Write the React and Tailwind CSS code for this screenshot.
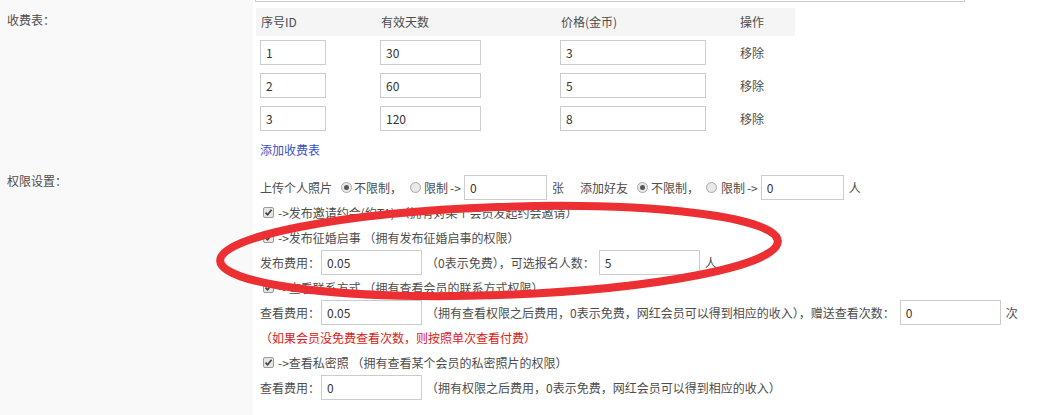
import React from 'react';

const feeRows = [
  { id: '1', days: '30', price: '3' },
  { id: '2', days: '60', price: '5' },
  { id: '3', days: '120', price: '8' }
];

function Radio({ checked, className = '' }) {
  return (
    <span className={`inline-flex h-[11px] w-[11px] shrink-0 items-center justify-center rounded-full border border-[#a9a9a9] bg-[#e9e9e9] ${className}`}>
      {checked && <span className="h-[5px] w-[5px] rounded-full bg-[#555]" />}
    </span>
  );
}

function Check({ className = '' }) {
  return (
    <span className={`inline-flex h-[11px] w-[11px] shrink-0 items-center justify-center rounded-[2px] border border-[#9c9c9c] bg-[#e6e6e6] ${className}`}>
      <svg width="9" height="9" viewBox="0 0 9 9">
        <path d="M1.5 4.6 L3.6 6.8 L7.6 1.8" fill="none" stroke="#3f3f3f" strokeWidth="1.6" />
      </svg>
    </span>
  );
}

function Field({ value, width, className = '' }) {
  return (
    <div
      className={`flex h-[25px] shrink-0 items-center border border-[#cccccc] bg-white pl-[5px] text-[12px] text-[#333] ${className}`}
      style={{ width }}
    >
      {value}
    </div>
  );
}

function Row({ children }) {
  return <div className="flex h-[25px] items-center whitespace-nowrap pl-[7px]">{children}</div>;
}

export default function App() {
  return (
    <div className="relative h-[415px] w-[1051px] overflow-hidden bg-white font-['Microsoft_YaHei','Noto_Sans_CJK_SC',sans-serif] text-[12px] leading-[18px] text-[#4d4d4d]">
      {/* 收费表 */}
      <div className="flex h-[170px]">
        <div className="w-[253px] shrink-0 bg-[#f9f9f9] pl-[7px] pt-[11px]">收费表：</div>
        <div className="flex-1">
          <div className="ml-[2px] h-[2px] w-[710px] border-b border-l border-r border-[#cccccc]" />
          <div className="ml-[3px] mt-[6px] grid w-[539px] grid-cols-[120px_180px_179px_60px]">
            {['序号ID', '有效天数', '价格(金币)', '操作'].map((h) => (
              <div key={h} className="flex h-[28px] items-center bg-[#f5f5f5] pl-[5px]">{h}</div>
            ))}
            {feeRows.map((r) => (
              <React.Fragment key={r.id}>
                <div className="flex h-[33px] items-center pl-[4px]"><Field value={r.id} width={66} /></div>
                <div className="flex h-[33px] items-center pl-[4px]"><Field value={r.days} width={101} /></div>
                <div className="flex h-[33px] items-center pl-[4px]"><Field value={r.price} width={146} /></div>
                <div className="flex h-[33px] items-center pl-[5px]">移除</div>
              </React.Fragment>
            ))}
          </div>
          <div className="flex h-[30px] items-center pl-[7px] text-[#3a52c4]">添加收费表</div>
        </div>
      </div>

      {/* 权限设置 */}
      <div className="flex h-[245px]">
        <div className="w-[253px] shrink-0 bg-[#f9f9f9] pl-[7px] pt-[2px]">权限设置：</div>
        <div className="flex-1 pt-[5px]">
          <Row>
            <span>上传个人照片</span>
            <Radio checked className="ml-[9px]" />
            <span className="ml-[2px]">不限制，</span>
            <Radio className="ml-[8px]" />
            <span className="ml-[3px]">限制</span>
            <span className="ml-[2px] mr-[3px]">-&gt;</span>
            <Field value="0" width={83} />
            <span className="ml-[5px]">张</span>
            <span className="ml-[16px]">添加好友</span>
            <Radio checked className="ml-[9px]" />
            <span className="ml-[3px]">不限制，</span>
            <Radio className="ml-[7px]" />
            <span className="ml-[4px]">限制</span>
            <span className="ml-[2px] mr-[3px]">-&gt;</span>
            <Field value="0" width={83} />
            <span className="ml-[5px]">人</span>
          </Row>
          <Row>
            <Check className="ml-[3px]" />
            <span className="ml-[4px]">-&gt;发布邀请约会(约TA) （拥有对某个会员发起约会邀请）</span>
          </Row>
          <Row>
            <Check className="ml-[3px]" />
            <span className="ml-[4px]">-&gt;发布征婚启事 （拥有发布征婚启事的权限）</span>
          </Row>
          <Row>
            <span>发布费用：</span>
            <Field value="0.05" width={101} className="ml-[1px]" />
            <span className="ml-[4px] mr-[4px]">（0表示免费），可选报名人数：</span>
            <Field value="5" width={101} />
            <span className="ml-[5px]">人</span>
          </Row>
          <Row>
            <Check className="ml-[3px]" />
            <span className="ml-[4px]">-&gt;查看联系方式 （拥有查看会员的联系方式权限）</span>
          </Row>
          <Row>
            <span>查看费用：</span>
            <Field value="0.05" width={101} className="ml-[1px]" />
            <span className="ml-[4px] mr-[5px]">（拥有查看权限之后费用，0表示免费，网红会员可以得到相应的收入），赠送查看次数：</span>
            <Field value="0" width={101} />
            <span className="ml-[5px]">次</span>
          </Row>
          <Row>
            <span className="text-[#e02020]">（如果会员没免费查看次数，则按照单次查看付费）</span>
          </Row>
          <Row>
            <Check className="ml-[3px]" />
            <span className="ml-[4px]">-&gt;查看私密照 （拥有查看某个会员的私密照片的权限）</span>
          </Row>
          <Row>
            <span>查看费用：</span>
            <Field value="0" width={101} className="ml-[1px]" />
            <span className="ml-[4px]">（拥有权限之后费用，0表示免费，网红会员可以得到相应的收入）</span>
          </Row>
        </div>
      </div>

      {/* red hand-drawn annotation */}
      <svg className="pointer-events-none absolute left-0 top-0" width="1051" height="415">
        <ellipse cx="499" cy="251" rx="279" ry="44" transform="rotate(-2 499 251)" fill="none" stroke="#ec2f33" strokeWidth="8" />
      </svg>
    </div>
  );
}
